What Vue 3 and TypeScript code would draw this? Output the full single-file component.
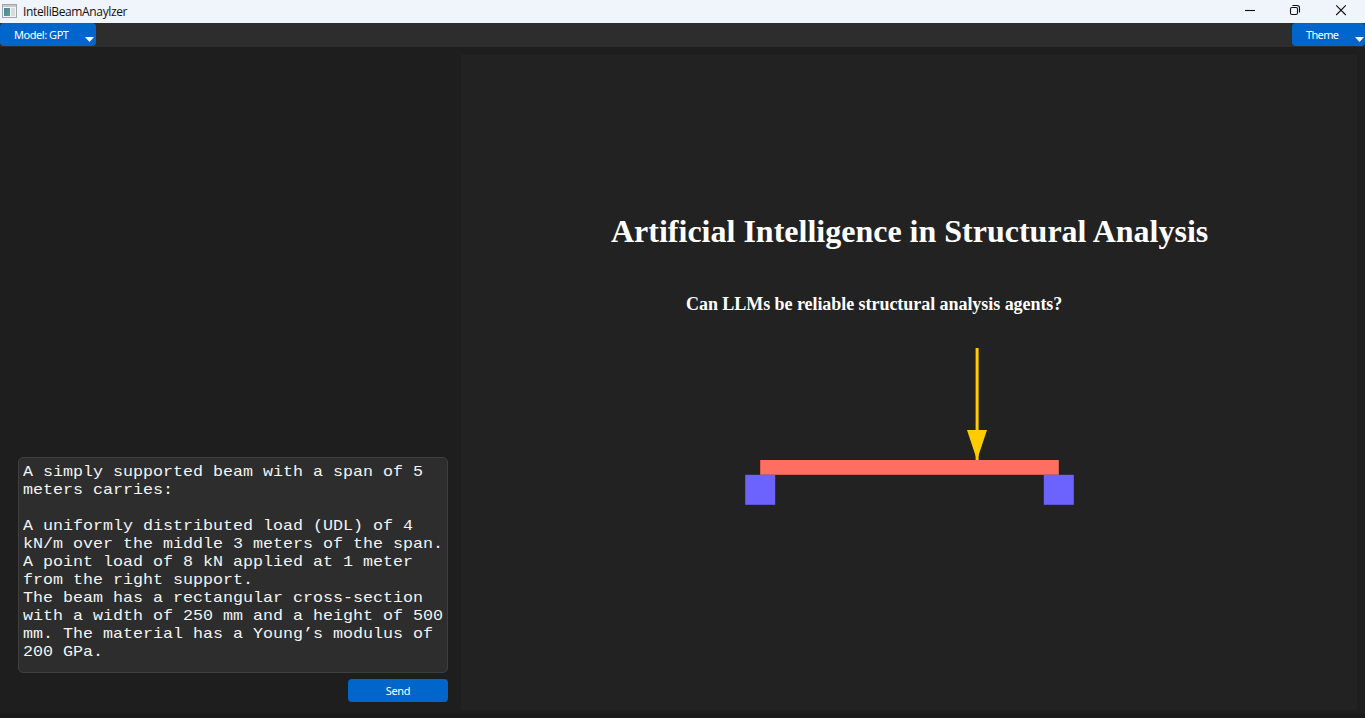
<script setup lang="ts">
import { ref } from 'vue'

const prompt = ref<string[]>([
  'A simply supported beam with a span of 5',
  'meters carries:',
  '',
  'A uniformly distributed load (UDL) of 4',
  'kN/m over the middle 3 meters of the span.',
  'A point load of 8 kN applied at 1 meter',
  'from the right support.',
  'The beam has a rectangular cross-section',
  'with a width of 250 mm and a height of 500',
  'mm. The material has a Young’s modulus of',
  '200 GPa.',
])
</script>

<template>
  <div class="window">
    <header class="titlebar">
      <svg class="app-icon" width="15" height="14" viewBox="0 0 15 14">
        <defs>
          <linearGradient id="pane" x1="0" y1="0" x2="1" y2="1">
            <stop offset="0" stop-color="#4a7fa5" />
            <stop offset="1" stop-color="#55a883" />
          </linearGradient>
        </defs>
        <rect x="0.5" y="0.5" width="14" height="13" fill="#f4f4f4" stroke="#a3a7ab" />
        <rect x="1" y="1" width="13" height="2" fill="#c3c8cc" />
        <rect x="2" y="4" width="6" height="8" fill="url(#pane)" />
        <rect x="9" y="4" width="4" height="8" fill="#d9dcde" />
      </svg>
      <span class="app-name">IntelliBeamAnaylzer</span>
      <div class="controls">
        <svg width="46" height="23" viewBox="0 0 46 23"><path d="M18 10.5h10" /></svg>
        <svg width="46" height="23" viewBox="0 0 46 23">
          <rect x="17.5" y="7.5" width="7" height="7" rx="1.4" />
          <path d="M19.4 5.5h4.6q2.5 0 2.5 2.5v4.6" />
        </svg>
        <svg width="46" height="23" viewBox="0 0 46 23"><path d="M17.2 5.4l9.6 9.6M26.8 5.4l-9.6 9.6" /></svg>
      </div>
    </header>

    <nav class="toolbar">
      <button class="menu model">
        <span>Model: GPT</span>
        <svg width="9" height="5" viewBox="0 0 9 5"><path d="M0 0h9L4.5 5z" /></svg>
      </button>
      <button class="menu theme">
        <span>Theme</span>
        <svg width="9" height="5" viewBox="0 0 9 5"><path d="M0 0h9L4.5 5z" /></svg>
      </button>
    </nav>

    <main class="body">
      <section class="chat">
        <div class="prompt">
          <div v-for="(line, i) in prompt" :key="i" class="line">{{ line }}</div>
        </div>
        <button class="send">Send</button>
      </section>

      <section class="canvas">
        <h1>Artificial Intelligence in Structural Analysis</h1>
        <h2>Can LLMs be reliable structural analysis agents?</h2>
        <svg class="beam" width="330" height="160" viewBox="0 0 330 160">
          <rect x="15.2" y="113" width="298.6" height="14.8" fill="#ff6f61" />
          <rect x="0.2" y="127.8" width="30" height="30" fill="#6c63ff" />
          <rect x="298.8" y="127.8" width="30" height="30" fill="#6c63ff" />
          <path d="M232.1 1v112" stroke="#ffcc00" stroke-width="3" />
          <path d="M222 83h20l-10 30z" fill="#ffcc00" />
        </svg>
      </section>
    </main>
    <footer class="edge"></footer>
  </div>
</template>

<style>
body {
  margin: 0;
  background: #1e1e1e;
}
</style>

<style scoped>
.window {
  box-sizing: border-box;
  width: 1365px;
  height: 718px;
  display: flex;
  flex-direction: column;
  overflow: hidden;
  background: #1e1e1e;
  font-family: 'Noto Sans', 'Open Sans', sans-serif;
}

.titlebar {
  flex: none;
  height: 23px;
  display: flex;
  align-items: center;
  background: #f0f4fb;
  color: #111;
}

.app-icon {
  margin: 0 6px 1px 2px;
}

.app-name {
  font-family: 'Open Sans', sans-serif;
  font-size: 12px;
  line-height: 23px;
  letter-spacing: -0.36px;
}

.controls {
  display: flex;
  margin-left: auto;
}

.controls svg {
  fill: none;
  stroke: #111;
  stroke-width: 1.1;
}

.toolbar {
  flex: none;
  height: 24px;
  display: flex;
  justify-content: space-between;
  align-items: flex-start;
  background: #2d2d2d;
}

button {
  border: 0;
  border-radius: 4px;
  background: #0066cc;
  color: #fff;
  font-family: 'Noto Sans', sans-serif;
  font-size: 11px;
  letter-spacing: -0.3px;
}

.menu {
  box-sizing: border-box;
  height: 23px;
  display: flex;
  justify-content: space-between;
  align-items: flex-end;
  line-height: 23px;
}

.menu svg {
  margin-bottom: 4px;
  fill: #fff;
}

.model {
  width: 96px;
  padding: 0 2px 0 14px;
  letter-spacing: -0.45px;
}

.theme {
  width: 73px;
  padding: 0 1px 0 14px;
  letter-spacing: -0.65px;
}

.body {
  flex: 1;
  display: flex;
  min-height: 0;
}

.chat {
  box-sizing: border-box;
  width: 461px;
  padding: 0 13px 12px 18px;
  display: flex;
  flex-direction: column;
  justify-content: flex-end;
  align-items: flex-end;
  gap: 6px;
}

.prompt {
  box-sizing: border-box;
  width: 430px;
  height: 216px;
  padding: 6px 4px;
  border: 1px solid #3f3f3f;
  border-radius: 5px;
  background: #2d2d2d;
  color: #f4f4f4;
  font-family: 'Liberation Mono', monospace;
  font-size: 15px;
  white-space: pre;
}

.line {
  height: 18px;
  line-height: 18px;
  transform: scaleX(1.111);
  transform-origin: left center;
}

.send {
  width: 100px;
  height: 23px;
  padding: 0;
}

.canvas {
  width: 896px;
  margin: 8px 8px 4px 0;
  background: #222;
  color: #fff;
  display: flex;
  flex-direction: column;
  align-items: flex-start;
  font-family: 'Liberation Serif', serif;
}

h1 {
  margin: 157px 0 0 150px;
  font-size: 32px;
  line-height: 38px;
  white-space: nowrap;
}

h2 {
  margin: 43px 0 0 225px;
  font-size: 18px;
  line-height: 22px;
  letter-spacing: -0.05px;
  white-space: nowrap;
}

.beam {
  margin: 32px 0 0 284px;
}

.edge {
  flex: none;
  height: 4px;
  background: #1d191b;
}
</style>
